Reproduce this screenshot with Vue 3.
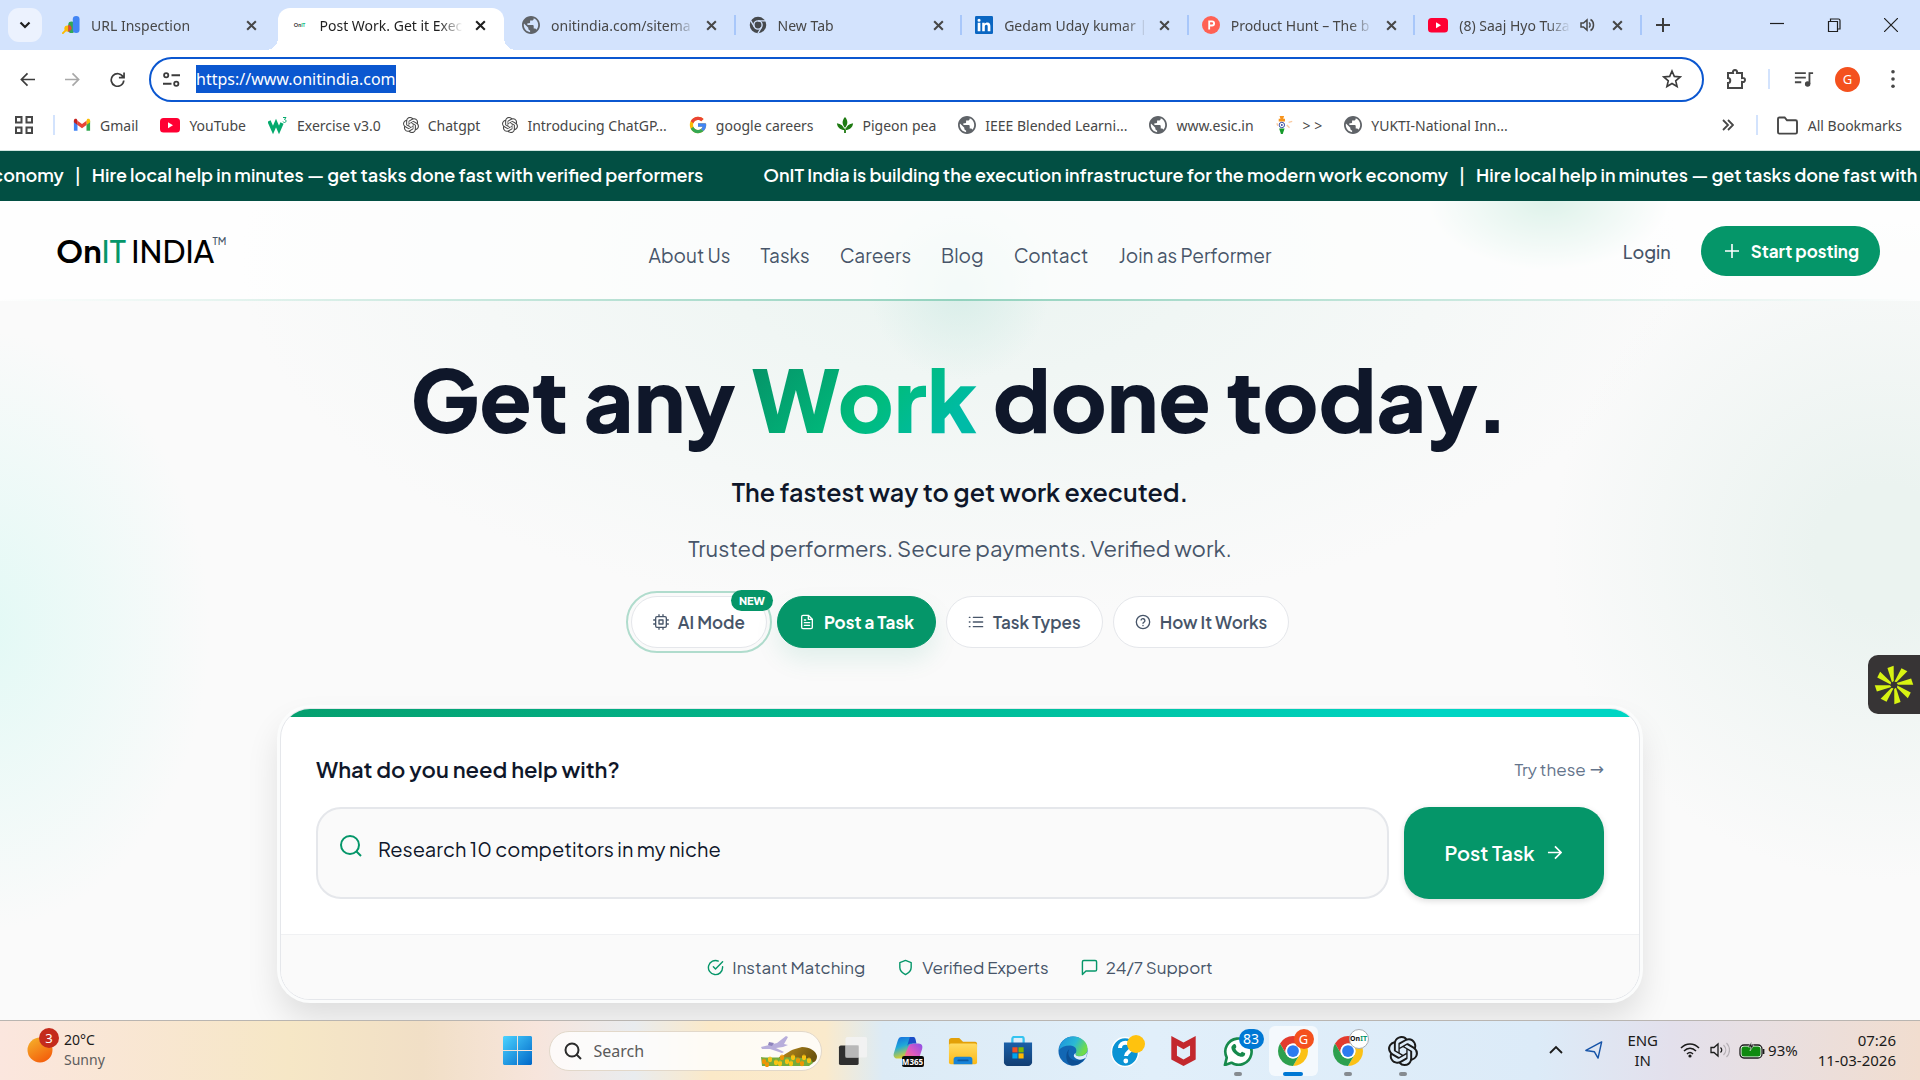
<template>
  <div class="desktop">
    <!-- shared icon shapes -->
    <svg class="sprite" aria-hidden="true">
      <defs>
        <linearGradient id="winGrad" x1="0" y1="0" x2="1" y2="1">
          <stop offset="0" stop-color="#4cd3ff" />
          <stop offset="1" stop-color="#0067c8" />
        </linearGradient>
        <linearGradient id="sunGrad" x1="0" y1="0" x2="0.6" y2="1">
          <stop offset="0" stop-color="#f5b52c" />
          <stop offset="1" stop-color="#f4600c" />
        </linearGradient>
        <linearGradient id="edgeGrad" x1="0" y1="0" x2="1" y2="0.4">
          <stop offset="0" stop-color="#1b8fe0" />
          <stop offset="0.6" stop-color="#2bb9d4" />
          <stop offset="1" stop-color="#6fdc4a" />
        </linearGradient>
        <linearGradient id="pilotBlue" x1="0" y1="0" x2="0.3" y2="1">
          <stop offset="0" stop-color="#1568e0" />
          <stop offset="0.5" stop-color="#20a9d8" />
          <stop offset="1" stop-color="#d8cf2c" />
        </linearGradient>
        <linearGradient id="pilotPink" x1="1" y1="0" x2="0" y2="1">
          <stop offset="0" stop-color="#8a50e8" />
          <stop offset="0.5" stop-color="#e05ac0" />
          <stop offset="1" stop-color="#ff8a50" />
        </linearGradient>
        <linearGradient id="folderGrad" x1="0" y1="0" x2="0" y2="1">
          <stop offset="0" stop-color="#ffdb62" />
          <stop offset="1" stop-color="#fbb917" />
        </linearGradient>
        <linearGradient id="storeGrad" x1="0" y1="0" x2="0" y2="1">
          <stop offset="0" stop-color="#1a5fa8" />
          <stop offset="1" stop-color="#123e72" />
        </linearGradient>
        <linearGradient id="hillGrad" x1="0" y1="0" x2="1" y2="0.3">
          <stop offset="0" stop-color="#c08f1c" />
          <stop offset="1" stop-color="#6d5510" />
        </linearGradient>
      </defs>
      <symbol id="close" viewBox="0 0 12 12">
        <path d="M2 2l8 8M10 2l-8 8" stroke="currentColor" stroke-width="1.9" fill="none" />
      </symbol>
      <symbol id="search-console" viewBox="0 0 20 20">
        <path d="M1 19l5-5" stroke="#fbbc04" stroke-width="2.2" stroke-linecap="round" />
        <circle cx="6" cy="14" r="3.4" fill="#fbbc04" />
        <rect x="7" y="6" width="7" height="13" rx="3.5" fill="#34a853" />
        <rect x="12" y="0" width="7.500" height="19" rx="3.7" fill="#4285f4" />
        <path d="M7 10a3.500 3.500 0 0 1 2 6.500L7 18z" fill="#ea4335" />
      </symbol>
      <symbol id="globe" viewBox="2 2 20 20">
        <path
          fill="#5f6368"
          d="M12 2C6.480 2 2 6.480 2 12s4.480 10 10 10 10-4.480 10-10S17.520 2 12 2zm-1 17.930c-3.950-.490-7-3.850-7-7.930 0-.620.080-1.210.210-1.790L9 15v1c0 1.100.9 2 2 2v1.930zm6.900-2.540c-.260-.810-1-1.390-1.900-1.390h-1v-3c0-.550-.450-1-1-1H8v-2h2c.550 0 1-.450 1-1V7h2c1.100 0 2-.9 2-2v-.410c2.930 1.190 5 4.060 5 7.410 0 2.080-.8 3.970-2.100 5.390z"
        />
      </symbol>
      <symbol id="chrome-dark" viewBox="0 0 24 24">
        <circle cx="12" cy="12" r="11" fill="#45494d" />
        <circle cx="12" cy="12" r="5.500" fill="none" stroke="#d3e3fd" stroke-width="1.800" />
        <path d="M12 6.500h10M7.200 14.700L2.500 6.500M16.800 14.700L12 23" stroke="#d3e3fd" stroke-width="1.800" />
      </symbol>
      <symbol id="linkedin" viewBox="0 0 20 20">
        <rect width="20" height="20" rx="1.500" fill="#0a66c2" />
        <path
          fill="#fff"
          d="M3 7.500h3V17H3zM4.500 3a1.700 1.700 0 1 1 0 3.500 1.700 1.700 0 0 1 0-3.500zM8 7.500h2.800v1.300c.4-.8 1.500-1.500 2.900-1.500 2.900 0 3.400 1.900 3.400 4.400V17h-3v-4.700c0-1.100 0-2.500-1.500-2.500s-1.700 1.200-1.700 2.400V17H8z"
        />
      </symbol>
      <symbol id="producthunt" viewBox="0 0 20 20">
        <circle cx="10" cy="10" r="10" fill="#ff6154" />
        <path d="M7 15V5h4.200a3.300 3.300 0 0 1 0 6.600H9V15zm2-5.500h2.100a1.200 1.200 0 0 0 0-2.500H9z" fill="#fff" />
      </symbol>
      <symbol id="youtube" viewBox="0 0 20 20">
        <rect y="3" width="20" height="14.500" rx="3.500" fill="#f03" />
        <path d="M8 7.200v6l5-3z" fill="#fff" />
      </symbol>
      <symbol id="gmail" viewBox="0 0 20 20">
        <path d="M1 5.500v11h4V8.500z" fill="#4285f4" />
        <path d="M19 5.500v11h-4V8.500z" fill="#34a853" />
        <path d="M15 5.200V10l4-3V5c0-2-2-2.600-3.300-1.600z" fill="#fbbc04" />
        <path d="M5 5.200V10l5 3.700 5-3.700V5.200L10 9z" fill="#ea4335" />
        <path d="M1 5v2l4 3V5.200L4.300 3.500C3 2.500 1 3.200 1 5z" fill="#c5221f" />
      </symbol>
      <symbol id="w3" viewBox="0 0 20 20">
        <path d="M1 6l4 9 3-7 3 7 3-7" fill="none" stroke="#04aa6d" stroke-width="3.400" />
        <path d="M15 2.500h3l-1.500 2c2 0 2 3 0 3-.8 0-1.300-.3-1.500-1" fill="none" stroke="#04aa6d" />
      </symbol>
      <symbol id="openai" viewBox="0 0 24 24">
        <path
          fill="currentColor"
          d="M22.2819 9.8211a5.9847 5.9847 0 0 0-.5157-4.9108 6.0462 6.0462 0 0 0-6.5098-2.9A6.0651 6.0651 0 0 0 4.9807 4.1818a5.9847 5.9847 0 0 0-3.9977 2.9 6.0462 6.0462 0 0 0 .7427 7.0966 5.98 5.98 0 0 0 .511 4.9107 6.051 6.051 0 0 0 6.5146 2.9001A5.9847 5.9847 0 0 0 13.2599 24a6.0557 6.0557 0 0 0 5.7718-4.2058 5.9894 5.9894 0 0 0 3.9977-2.9001 6.0557 6.0557 0 0 0-.7475-7.0729zm-9.022 12.6081a4.4755 4.4755 0 0 1-2.8764-1.0408l.1419-.0804 4.7783-2.7582a.7948.7948 0 0 0 .3927-.6813v-6.7369l2.02 1.1686a.071.071 0 0 1 .038.052v5.5826a4.504 4.504 0 0 1-4.4945 4.4944zm-9.6607-4.1254a4.4708 4.4708 0 0 1-.5346-3.0137l.142.0852 4.783 2.7582a.7712.7712 0 0 0 .7806 0l5.8428-3.3685v2.3324a.0804.0804 0 0 1-.0332.0615L9.74 19.9502a4.4992 4.4992 0 0 1-6.1408-1.6464zM2.3408 7.8956a4.485 4.485 0 0 1 2.3655-1.9728V11.6a.7664.7664 0 0 0 .3879.6765l5.8144 3.3543-2.0201 1.1685a.0757.0757 0 0 1-.071 0l-4.8303-2.7865A4.504 4.504 0 0 1 2.3408 7.872zm16.5963 3.8558L13.1038 8.364 15.1192 7.2a.0757.0757 0 0 1 .071 0l4.8303 2.7913a4.4944 4.4944 0 0 1-.6765 8.1042v-5.6772a.79.79 0 0 0-.407-.667zm2.0107-3.0231l-.142-.0852-4.7735-2.7818a.7759.7759 0 0 0-.7854 0L9.409 9.2297V6.8974a.0662.0662 0 0 1 .0284-.0615l4.8303-2.7866a4.4992 4.4992 0 0 1 6.6802 4.66zM8.3065 12.863l-2.02-1.1638a.0804.0804 0 0 1-.038-.0567V6.0742a4.4992 4.4992 0 0 1 7.3757-3.4537l-.142.0805L8.704 5.459a.7948.7948 0 0 0-.3927.6813zm1.0976-2.3654l2.602-1.4998 2.6069 1.4998v2.9994l-2.5974 1.4997-2.6067-1.4997Z"
        />
      </symbol>
      <symbol id="google" viewBox="2 2 44 44">
        <path
          fill="#fbbc05"
          d="M43.611 20.083H42V20H24v8h11.303c-1.649 4.657-6.080 8-11.303 8-6.627 0-12-5.373-12-12s5.373-12 12-12c3.059 0 5.842 1.154 7.961 3.039l5.657-5.657C34.046 6.053 29.268 4 24 4 12.955 4 4 12.955 4 24s8.955 20 20 20 20-8.955 20-20c0-1.341-.138-2.650-.389-3.917z"
        />
        <path
          fill="#ea4335"
          d="M6.306 14.691l6.571 4.819C14.655 15.108 18.961 12 24 12c3.059 0 5.842 1.154 7.961 3.039l5.657-5.657C34.046 6.053 29.268 4 24 4 16.318 4 9.656 8.337 6.306 14.691z"
        />
        <path
          fill="#34a853"
          d="M24 44c5.166 0 9.860-1.977 13.409-5.192l-6.190-5.238C29.211 35.091 26.715 36 24 36c-5.202 0-9.619-3.317-11.283-7.946l-6.522 5.025C9.505 39.556 16.227 44 24 44z"
        />
        <path
          fill="#4285f4"
          d="M43.611 20.083H42V20H24v8h11.303c-.792 2.237-2.231 4.166-4.087 5.571l6.190 5.238C36.971 39.205 44 34 44 24c0-1.341-.138-2.650-.389-3.917z"
        />
      </symbol>
      <symbol id="leaf" viewBox="0 0 20 20">
        <path
          fill="#1e7a12"
          d="M10 1c3.500 4 3.500 8 0 12C6.500 9 6.500 5 10 1zM1 8c4.500.5 7.500 3 8.500 7.500C5 15.500 1.500 13 1 8zM19 8c-4.500.5-7.500 3-8.500 7.500 4.500 0 8-2.500 8.500-7.500zM9 14h2v5H9z"
        />
      </symbol>
      <symbol id="torch" viewBox="0 0 20 20">
        <path d="M4 0h5l-1 3h2v3H3V3h2z" fill="#f7941d" />
        <circle cx="6.500" cy="10" r="3" fill="#fff" stroke="#2a3e9c" stroke-width="1" />
        <circle cx="6.500" cy="10" r="1" fill="#2a3e9c" />
        <path d="M3.500 14h6l-2 6h-2z" fill="#159a2a" />
        <path d="M1 8l1 3M14 7l4-1M12 10l3 3" stroke="#f9c9a0" stroke-width="1.500" />
      </symbol>
      <symbol id="chrome" viewBox="0 0 24 24">
        <path d="M1.610 6A12 12 0 0 1 22.390 6H12A6 6 0 0 0 6.800 15z" fill="#e33b2e" />
        <path d="M22.390 6A12 12 0 0 1 12 24l5.200-9A6 6 0 0 0 12 6z" fill="#fbc116" />
        <path d="M12 24A12 12 0 0 1 1.610 6l5.190 9a6 6 0 0 0 10.400 0z" fill="#2da04e" />
        <circle cx="12" cy="12" r="6" fill="#fff" />
        <circle cx="12" cy="12" r="4.700" fill="#2d7bf0" />
      </symbol>
      <symbol id="taskview" viewBox="0 0 32 32">
        <rect x="1" y="10" width="21" height="21" rx="2" fill="#2f2f2f" />
        <rect x="8" y="1" width="23" height="22" rx="2" fill="#f3f3f3" fill-opacity="0.85" />
        <rect x="8" y="10" width="14" height="13" fill="#b8b8b8" />
      </symbol>
      <symbol id="m365" viewBox="0 0 32 32">
        <path d="M9 1h10c3 0 3 3 2 6l-4 13c-1 3-3 4-6 4H5c-4 0-5-3-4-6L5 5c1-3 2-4 4-4z" fill="url(#pilotBlue)" />
        <path d="M22 8h5c4 0 5 3 4 6l-3 9c-1 3-3 5-6 5h-9c-2 0-3-2-2-4l5-12c1-3 3-4 6-4z" fill="url(#pilotPink)" />
        <path d="M18 1h3c3 0 3 2 4 7h-6c-2 0-3 1-4 3z" fill="#1a4ec8" />
      </symbol>
      <symbol id="explorer" viewBox="0 0 32 32">
        <path d="M1 5c0-2 1-3 3-3h8l4 4h13c1 0 2 1 2 2v4H1z" fill="#e3a008" />
        <rect x="1" y="8" width="30" height="22" rx="2" fill="url(#folderGrad)" />
        <path d="M6 30v-5c0-2 1-3 3-3h14c2 0 3 1 3 3v5z" fill="#1683d8" />
        <rect x="10" y="25" width="12" height="2" rx="1" fill="#0c5aa0" />
      </symbol>
      <symbol id="store" viewBox="0 0 32 32">
        <path d="M10 8V3c0-1 1-2 2-2h8c1 0 2 1 2 2v5" fill="none" stroke="#35c4f0" stroke-width="2.400" />
        <path d="M1 7h30v21c0 2-2 4-4 4H5c-2 0-4-2-4-4z" fill="url(#storeGrad)" />
        <path d="M10 12h5.500v5.500H10z" fill="#f25022" />
        <path d="M16.500 12H22v5.500h-5.500z" fill="#7fba00" />
        <path d="M10 18.500h5.500V24H10z" fill="#00a4ef" />
        <path d="M16.500 18.500H22V24h-5.500z" fill="#ffb900" />
      </symbol>
      <symbol id="edge" viewBox="0 0 32 32">
        <circle cx="16" cy="16" r="15.500" fill="#1267b4" />
        <path d="M1 15C2 6 8 .5 16 .5c9 0 15.500 6 15.500 13 0 5-4 8-8.500 8-4 0-5-1.500-4-3.500 2-4-1-8-6-8C7 10 3 12 1 15z" fill="url(#edgeGrad)" />
        <path d="M12 14c-3 6 1 12 8 12 4 0 7-1 9-3-3 5-8 8.500-13 8.500C8 31 7 18 12 14z" fill="#0c4f94" />
        <path d="M32 18v9l-4 5h4V18zM19 18c-1 2 0 3.500 4 3.500 4 0 7-1.500 8.500-5L30 23c-3 2.500-9 3.500-12 0-2-2-1-4 1-5z" fill="#e0eefa" />
      </symbol>
      <symbol id="help" viewBox="0 0 36 32">
        <ellipse cx="15" cy="17" rx="13.500" ry="14.500" fill="#0a93d4" stroke="#fff" stroke-width="1.400" />
        <path d="M10 13c0-7 11-7 11 0 0 4-5 4-5 8" fill="none" stroke="#fff" stroke-width="4" />
        <circle cx="15.800" cy="26" r="2.400" fill="#fff" />
        <circle cx="26" cy="9" r="9" fill="#ffc20e" />
      </symbol>
      <symbol id="mcafee" viewBox="0 0 32 32">
        <path d="M3 0l13 7 13-7v25l-13 7-13-7zm6 10v11l7 4 7-4V10l-7 4z" fill="#c3282d" />
      </symbol>
      <symbol id="whatsapp" viewBox="0 0 32 32">
        <path d="M2 31l2-8a14 14 0 1 1 5 5.500z" fill="#fff" stroke="#178a4c" stroke-width="2.800" stroke-linejoin="round" />
        <path
          d="M11 9c1.500-1 2.300-.5 3 1.500.8 2-.8 2.500-.8 3.200 1 2.300 3 4 5.200 4.800.7 0 1.400-2 2.500-1.500 3.300 1.300 3 1.500 2.500 3-1 3-5.500 2.500-8.500.5-3.700-2.200-5.700-5-6-8 0-1.500.9-2.700 2.100-3.500z"
          fill="#178a4c"
        />
      </symbol>
      <symbol id="cpu" viewBox="0 0 24 24">
        <path
          d="M6 4h12a2 2 0 0 1 2 2v12a2 2 0 0 1-2 2H6a2 2 0 0 1-2-2V6a2 2 0 0 1 2-2zM9 9h6v6H9zM9 1v3M15 1v3M9 20v3M15 20v3M20 9h3M20 15h3M1 9h3M1 15h3"
        />
      </symbol>
      <symbol id="doc" viewBox="0 0 24 24">
        <path d="M14 2H6a2 2 0 0 0-2 2v16a2 2 0 0 0 2 2h12a2 2 0 0 0 2-2V8zM14 2v6h6M16 13H8M16 17H8M10 9H8" />
      </symbol>
      <symbol id="list" viewBox="0 0 24 24">
        <path d="M8 5h14M8 12h14M8 19h14M2 5h1M2 12h1M2 19h1" />
      </symbol>
      <symbol id="question" viewBox="0 0 24 24">
        <circle cx="12" cy="12" r="10" />
        <path d="M9.100 9a3 3 0 0 1 5.800 1c0 2-2.900 2.500-2.900 4M12 17v.5" />
      </symbol>
      <symbol id="check" viewBox="0 0 24 24">
        <path d="M22 11v1a10 10 0 1 1-6-9.100M22 4L12 14l-3-3" />
      </symbol>
      <symbol id="shield" viewBox="0 0 24 24">
        <path d="M12 22s8-4 8-10V5l-8-3-8 3v7c0 6 8 10 8 10z" />
      </symbol>
      <symbol id="chat" viewBox="0 0 24 24">
        <path d="M22 15a2 2 0 0 1-2 2H7l-5 5V4a2 2 0 0 1 2-2h16a2 2 0 0 1 2 2z" />
      </symbol>
    </svg>

    <header class="browser">
      <div class="tabstrip">
        <button class="tab-search" aria-label="Search tabs">
          <svg width="12" height="12" viewBox="0 0 12 12"><path d="M1.500 3.500L6 8l4.500-4.500" fill="none" stroke="#1f1f1f" stroke-width="2.200" /></svg>
        </button>
        <div class="tabs">
          <div v-for="tab in tabs" :key="tab.title" class="tab" :class="{ active: tab.active, plain: tab.plain }">
            <span v-if="tab.active" class="onit-icon">On<i>IT</i></span>
            <svg v-else class="favicon" :class="tab.icon"><use :href="'#' + tab.icon" /></svg>
            <span class="tab-title">{{ tab.title }}</span>
            <svg v-if="tab.audio" class="audio" viewBox="0 0 16 16">
              <path d="M2 6h2.500L8 3v10l-3.500-3H2z" fill="none" stroke="#474747" stroke-width="1.500" />
              <path d="M10 5.500c1.500 1 1.500 4 0 5M11.500 2.500c4 2 4 9 0 11" fill="none" stroke="#474747" stroke-width="1.500" />
            </svg>
            <button class="tab-close" aria-label="Close tab"><svg><use href="#close" /></svg></button>
          </div>
        </div>
        <button class="new-tab" aria-label="New tab">
          <svg width="14" height="14" viewBox="0 0 14 14"><path d="M7 0v14M0 7h14" stroke="#3c3c3c" stroke-width="2" /></svg>
        </button>
        <div class="window-controls">
          <button aria-label="Minimize"><svg viewBox="0 0 14 14"><path d="M0 5.500h14" /></svg></button>
          <button aria-label="Restore">
            <svg viewBox="0 0 14 14"><path d="M1.500 3.500h9v10h-9zM3.500 3V1h8a1.500 1.500 0 0 1 1.500 1.500V11h-2" /></svg>
          </button>
          <button aria-label="Close"><svg viewBox="0 0 14 14"><path d="M0 0l14 14M14 0L0 14" /></svg></button>
        </div>
      </div>

      <div class="toolbar">
        <div class="nav-buttons">
          <button aria-label="Back"><svg viewBox="0 0 16 16"><path d="M16 8H2M8 1.500L1.500 8 8 14.500" /></svg></button>
          <button class="dim" aria-label="Forward"><svg viewBox="0 0 16 16"><path d="M0 8h14M8 1.500L14.500 8 8 14.500" /></svg></button>
          <button aria-label="Reload"><svg viewBox="0 0 16 16"><path d="M14 5.500A6.700 6.700 0 1 0 14.700 9M15 .5V6H9.500" /></svg></button>
        </div>
        <div class="omnibox">
          <svg class="site-icon" viewBox="0 0 16 16">
            <path d="M8 4h8M0 12h8" /><circle cx="3" cy="4" r="2" /><circle cx="12.500" cy="12" r="2" />
          </svg>
          <input v-model="url" class="url" type="text" aria-label="Address" spellcheck="false" />
          <button class="star" aria-label="Bookmark this tab">
            <svg viewBox="0 0 20 20"><path d="M10 2l2.300 5.400 5.900.5-4.500 3.900 1.400 5.700-5.100-3-5.100 3 1.400-5.700L1.800 7.900l5.900-.5z" /></svg>
          </button>
        </div>
        <div class="toolbar-right">
          <button aria-label="Extensions">
            <svg class="puzzle" viewBox="0 0 22 22"><path d="M3 5h5c-1-4 5-4 4 0h5v5c4-1 4 5 0 4v6H3v-5c3 0 3-5 0-5z" /></svg>
          </button>
          <i class="bar"></i>
          <button aria-label="Media controls">
            <svg class="media" viewBox="0 0 22 20">
              <path d="M1 3h12M1 8h12M1 13h7" /><path d="M17 15V3h4" /><circle cx="15" cy="15" r="2" fill="#474747" />
            </svg>
          </button>
          <button class="avatar">G</button>
          <button aria-label="Menu" class="dots"><svg viewBox="0 0 4 20"><circle cx="2" cy="2" r="2" /><circle cx="2" cy="10" r="2" /><circle cx="2" cy="18" r="2" /></svg></button>
        </div>
      </div>

      <nav class="bookmarks">
        <button class="apps" aria-label="Apps">
          <svg viewBox="0 0 18 18"><path d="M1 1h5.500v5.500H1zM11.500 1H17v5.500h-5.500zM1 11.500h5.500V17H1zM11.500 11.500H17V17h-5.500z" /></svg>
        </button>
        <i class="bar"></i>
        <div class="bookmark-list">
          <a v-for="mark in bookmarks" :key="mark.label" href="#">
            <svg class="favicon" :class="mark.icon"><use :href="'#' + mark.icon" /></svg>{{ mark.label }}
          </a>
        </div>
        <button class="overflow" aria-label="More bookmarks">
          <svg viewBox="0 0 12 12"><path d="M1 1l5 5-5 5M6 1l5 5-5 5" /></svg>
        </button>
        <i class="bar"></i>
        <a href="#" class="all">
          <svg viewBox="0 0 22 20"><path d="M1 3c0-1 .5-1.500 1.500-1.500H8l2.500 3h9c1 0 1.500.5 1.500 1.500v11c0 1-.5 1.500-1.500 1.500h-17C1.500 18.500 1 18 1 17z" /></svg>All Bookmarks
        </a>
      </nav>
    </header>

    <main class="page">
      <div class="ticker">
        <div class="ticker-track">
          <p v-for="n in 3" :key="n">
            OnIT India is building the execution infrastructure for the modern work economy<span>|</span>Hire local help in
            minutes — get tasks done fast with verified performers
          </p>
        </div>
      </div>

      <div class="site-nav">
        <a href="#" class="logo"><b>On</b><em>IT</em> INDIA<sup>TM</sup></a>
        <nav class="links">
          <a v-for="link in links" :key="link" href="#">{{ link }}</a>
        </nav>
        <div class="account">
          <a href="#">Login</a>
          <button class="start">
            <svg width="14" height="14" viewBox="0 0 14 14"><path d="M7 0v14M0 7h14" stroke="#fff" stroke-width="1.600" /></svg>
            Start posting
          </button>
        </div>
      </div>

      <section class="hero">
        <h1>Get any <span>Work</span> done today.</h1>
        <p class="lead">The fastest way to get work executed.</p>
        <p class="sub">Trusted performers. Secure payments. Verified work.</p>

        <div class="modes">
          <button v-for="mode in modes" :key="mode.label" class="mode" :class="mode.kind">
            <svg class="line"><use :href="'#' + mode.icon" /></svg>{{ mode.label }}
            <span v-if="mode.badge" class="badge">{{ mode.badge }}</span>
          </button>
        </div>

        <form class="card" @submit.prevent>
          <div class="card-body">
            <div class="card-head">
              <label for="task">What do you need help with?</label>
              <button type="button" class="try">Try these <span>→</span></button>
            </div>
            <div class="card-row">
              <div class="task-box">
                <svg viewBox="0 0 24 24"><circle cx="11" cy="11" r="9" /><path d="M17.500 17.500L22 22" /></svg>
                <textarea id="task" v-model="task" spellcheck="false"></textarea>
              </div>
              <button type="submit" class="post">
                Post Task
                <svg viewBox="0 0 16 16"><path d="M1 8h14M8.500 1.500L15 8l-6.500 6.500" /></svg>
              </button>
            </div>
          </div>
          <ul class="perks">
            <li v-for="perk in perks" :key="perk.label"><svg class="line"><use :href="'#' + perk.icon" /></svg>{{ perk.label }}</li>
          </ul>
        </form>
      </section>

      <button class="widget" aria-label="Accessibility">
        <svg viewBox="0 0 40 40">
          <path
            v-for="n in 8"
            :key="n"
            d="M18.500 17L16.500 2l6.500-1-2.500 15z"
            :transform="`rotate(${n * 45 - 10} 20 20)`"
          />
        </svg>
      </button>
    </main>

    <footer class="taskbar">
      <div class="weather">
        <div class="sun">
          <svg width="26" height="26" viewBox="0 0 26 26"><circle cx="13" cy="13" r="12.500" fill="url(#sunGrad)" /></svg>
          <span>3</span>
        </div>
        <p>20°C<small>Sunny</small></p>
      </div>

      <div class="dock">
        <button class="dock-item" aria-label="Start">
          <svg class="start-logo" viewBox="0 0 30 30">
            <path d="M1 0h13.500v14.500H0V1zM15.500 0H29l1 1v13.500H15.500zM0 15.500h14.500V30H1l-1-1zM15.500 15.500H30V29l-1 1H15.500z" fill="url(#winGrad)" />
          </svg>
        </button>
        <label class="search">
          <svg class="lens" viewBox="0 0 18 18"><circle cx="8" cy="8" r="6.500" /><path d="M12.500 12.500L17 17" /></svg>
          <input type="text" placeholder="Search" />
          <svg class="scene" viewBox="0 0 58 32">
            <path d="M19 22c7-2 9-6 16-8l7-2c8 0 14 4 15 9 0 4-2 6-5 7H19z" fill="url(#hillGrad)" />
            <path d="M1 22c10 2 30-2 50 2l2 4-4 3H2z" fill="#76ab3c" />
            <path d="M1 12l16-4L26 1l2 1-4 7 4 1-5 2-7 1 8 4-2 1-12-4H2z" fill="#b8aedb" />
            <path d="M9 7l5 1-2 3-4-1z" fill="#8e84bd" />
            <path
              v-for="(t, i) in tulips"
              :key="i"
              :d="`M${t[0]} ${t[1]}l1 1 1-2 1 2 1-1v3c0 3-4 3-4 0z`"
              :fill="i % 3 ? '#f9c312' : '#ee9505'"
            />
          </svg>
        </label>
        <button v-for="app in apps" :key="app.name" class="dock-item" :class="app.state" :aria-label="app.name">
          <svg class="app-icon" :class="app.icon"><use :href="'#' + app.icon" /></svg>
          <span v-if="app.badge" class="app-badge" :class="app.badgeKind">
            <template v-if="app.badgeKind === 'brand'">On<i>IT</i></template>
            <template v-else>{{ app.badge }}</template>
          </span>
        </button>
      </div>

      <div class="tray">
        <button aria-label="Show hidden icons"><svg width="14" height="9" viewBox="0 0 14 9"><path d="M1 8l6-6 6 6" fill="none" stroke="#1b1b1b" stroke-width="1.800" /></svg></button>
        <svg class="locate" viewBox="0 0 20 20"><path d="M18.500 1L1 10.500l9.500 1.500 4 7z" fill="none" stroke="#1553a8" stroke-width="1.600" stroke-linejoin="round" /></svg>
        <p class="lang">ENG<br />IN</p>
        <div class="status">
          <svg class="wifi" viewBox="0 0 20 16">
            <path d="M1 6c5-5.500 13-5.500 18 0M4 9c3.500-3.700 8.500-3.700 12 0M7 12c2-2 4-2 6 0" fill="none" stroke="#1b1b1b" stroke-width="1.500" />
            <circle cx="10" cy="14" r="1.600" fill="#1b1b1b" />
          </svg>
          <svg class="volume" viewBox="0 0 20 16">
            <path d="M1 5.500h3L8 2v12l-4-3.500H1z" fill="none" stroke="#1b1b1b" stroke-width="1.300" />
            <path d="M10.500 5.500c1.500 1.500 1.500 3.500 0 5" fill="none" stroke="#1b1b1b" stroke-width="1.200" />
            <path d="M13.500 3c3 3 3 7 0 10M16.500 1c4 4 4 10 0 14" fill="none" stroke="#b5b0b5" stroke-width="1.200" />
          </svg>
          <svg class="battery" viewBox="0 0 26 18">
            <rect x="1" y="4" width="22" height="13" rx="4" fill="#fff" stroke="#1b1b1b" stroke-width="1.300" />
            <rect x="2.500" y="5.500" width="19" height="10" rx="2.500" fill="#0f8a10" />
            <path d="M24.600 8v5" stroke="#1b1b1b" stroke-width="1.600" />
            <path d="M13 0l-4 6h3l-1 4 4-6h-3z" fill="#1b1b1b" stroke="#fff" stroke-width="0.500" />
          </svg>
          93%
        </div>
        <p class="clock">07:26<br />11-03-2026</p>
      </div>
    </footer>
  </div>
</template>

<script setup>
import { ref } from 'vue';

const url = ref('https://www.onitindia.com');
const task = ref('Research 10 competitors in my niche');

const tabs = [
  { title: 'URL Inspection', icon: 'search-console', plain: true },
  { title: 'Post Work. Get it Exec', active: true },
  { title: 'onitindia.com/sitema', icon: 'globe' },
  { title: 'New Tab', icon: 'chrome-dark' },
  { title: 'Gedam Uday kumar |', icon: 'linkedin' },
  { title: 'Product Hunt – The b', icon: 'producthunt' },
  { title: '(8) Saaj Hyo Tuza', icon: 'youtube', audio: true },
];

const bookmarks = [
  { label: 'Gmail', icon: 'gmail' },
  { label: 'YouTube', icon: 'youtube' },
  { label: 'Exercise v3.0', icon: 'w3' },
  { label: 'Chatgpt', icon: 'openai' },
  { label: 'Introducing ChatGP...', icon: 'openai' },
  { label: 'google careers', icon: 'google' },
  { label: 'Pigeon pea', icon: 'leaf' },
  { label: 'IEEE Blended Learni...', icon: 'globe' },
  { label: 'www.esic.in', icon: 'globe' },
  { label: '> >', icon: 'torch' },
  { label: 'YUKTI-National Inn...', icon: 'globe' },
];

const links = ['About Us', 'Tasks', 'Careers', 'Blog', 'Contact', 'Join as Performer'];

const modes = [
  { label: 'AI Mode', icon: 'cpu', kind: 'ring', badge: 'NEW' },
  { label: 'Post a Task', icon: 'doc', kind: 'primary' },
  { label: 'Task Types', icon: 'list' },
  { label: 'How It Works', icon: 'question' },
];

const perks = [
  { label: 'Instant Matching', icon: 'check' },
  { label: 'Verified Experts', icon: 'shield' },
  { label: '24/7 Support', icon: 'chat' },
];

const apps = [
  { name: 'Task View', icon: 'taskview' },
  { name: 'Microsoft 365 Copilot', icon: 'm365', badge: 'M365', badgeKind: 'tag' },
  { name: 'File Explorer', icon: 'explorer' },
  { name: 'Microsoft Store', icon: 'store' },
  { name: 'Edge', icon: 'edge' },
  { name: 'Support', icon: 'help' },
  { name: 'McAfee', icon: 'mcafee' },
  { name: 'WhatsApp', icon: 'whatsapp', state: 'open', badge: '83', badgeKind: 'count' },
  { name: 'Chrome', icon: 'chrome', state: 'focused', badge: 'G', badgeKind: 'profile' },
  { name: 'Chrome (OnIT)', icon: 'chrome', state: 'open', badge: 'OnIT', badgeKind: 'brand' },
  { name: 'ChatGPT', icon: 'openai', state: 'open' },
];

// flower heads in the search box scene
const tulips = [
  [2, 24], [8, 22], [14, 25], [20, 20], [25, 24], [31, 20], [36, 23], [42, 20], [47, 23], [5, 27], [18, 26], [29, 26], [40, 26],
];
</script>

<style>
body {
  margin: 0;
}
</style>

<style scoped>
.desktop {
  --ui: 'Segoe UI', 'Noto Sans', sans-serif;
  --site: 'Plus Jakarta Sans', Inter, sans-serif;
  display: flex;
  flex-direction: column;
  height: 100vh;
  overflow: hidden;
  font-family: var(--ui);
  color: #1f1f1f;
}
.desktop * {
  box-sizing: border-box;
}
.sprite {
  position: absolute;
  width: 0;
  height: 0;
}
button {
  display: flex;
  align-items: center;
  justify-content: center;
  padding: 0;
  border: 0;
  background: none;
  font: inherit;
  color: inherit;
}
a {
  color: inherit;
  text-decoration: none;
}
p {
  margin: 0;
}
svg {
  flex: none;
}

/* tab strip */
.browser {
  background: #fff;
}
.tabstrip {
  display: flex;
  height: 50px;
  padding-right: 1px;
  background: #d3e3fd;
}
.tab-search {
  width: 34px;
  height: 34px;
  margin: 8px 7px 0 8px;
  border-radius: 11px;
  background: #ecf2fe;
}
.tabs {
  display: flex;
  width: 83%;
}
.tab {
  position: relative;
  display: flex;
  flex: 1;
  align-items: center;
  min-width: 0;
  height: 42px;
  margin-top: 8px;
  padding: 0 15px 8px 13px;
  font-size: 14px;
  color: #474747;
}
.tab:not(.active):not(.plain)::after {
  content: '';
  position: absolute;
  right: 0;
  top: 7px;
  width: 2px;
  height: 20px;
  background: #a8c7fa;
}
.tab.active {
  margin: 8px 5px 0 2px;
  border-radius: 12px 12px 0 0;
  background: #fff;
  color: #1f1f1f;
}
.tab.active::before,
.tab.active::after {
  content: '';
  position: absolute;
  bottom: 0;
  width: 12px;
  height: 12px;
}
.tab.active::before {
  left: -12px;
  background: radial-gradient(circle at 0 0, transparent 12px, #fff 12px);
}
.tab.active::after {
  right: -12px;
  background: radial-gradient(circle at 100% 0, transparent 12px, #fff 12px);
}
.favicon {
  width: 18px;
  height: 18px;
}
.favicon.youtube,
.favicon.w3 {
  width: 20px;
  height: 20px;
}
.onit-icon {
  width: 18px;
  font: 700 5px var(--site);
  text-align: center;
}
.onit-icon i {
  font-style: normal;
  color: #10b981;
}
.tab-title {
  flex: 1;
  min-width: 0;
  margin: 0 8px 0 11px;
  overflow: hidden;
  white-space: nowrap;
  mask-image: linear-gradient(to right, #000 calc(100% - 24px), transparent);
}
.audio {
  width: 16px;
  height: 16px;
  margin-right: 14px;
}
.tab-close {
  width: 18px;
  height: 18px;
}
.tab-close svg {
  width: 13px;
  height: 13px;
}
.new-tab {
  width: 42px;
}
.window-controls {
  display: flex;
  margin-left: auto;
}
.window-controls button {
  width: 57px;
}
.window-controls svg {
  width: 14px;
  height: 14px;
  fill: none;
  stroke: #1f1f1f;
  stroke-width: 1.2;
}

/* toolbar */
.toolbar {
  display: flex;
  align-items: center;
  height: 58px;
  padding: 0 8px 0 5px;
}
.nav-buttons {
  display: flex;
  width: 144px;
}
.nav-buttons button {
  width: 45px;
  height: 45px;
}
.nav-buttons svg {
  width: 15px;
  height: 15px;
  fill: none;
  stroke: #3c3c3c;
  stroke-width: 1.8;
}
.nav-buttons .dim svg {
  stroke: #a8a8a8;
}
.omnibox {
  display: flex;
  flex: 1;
  align-items: center;
  height: 45px;
  padding: 0 20px 0 12px;
  border: 2px solid #0b57d0;
  border-radius: 23px;
}
.site-icon {
  width: 17px;
  height: 17px;
  margin-right: 16px;
  fill: none;
  stroke: #3c3c3c;
  stroke-width: 1.7;
}
.url {
  field-sizing: content;
  height: 28px;
  padding: 0;
  border: 0;
  background: #0b57d0;
  color: #fff;
  font: 16px var(--ui);
}
.star {
  margin-left: auto;
}
.star svg {
  width: 20px;
  height: 20px;
  fill: none;
  stroke: #3c3c3c;
  stroke-width: 1.6;
}
.toolbar-right {
  display: flex;
  align-items: center;
  width: 208px;
  padding-left: 21px;
}
.toolbar-right svg {
  fill: none;
  stroke: #474747;
  stroke-width: 2;
}
.toolbar-right .puzzle {
  width: 22px;
  height: 22px;
}
.bar {
  width: 2px;
  height: 20px;
  background: #d3e3fd;
}
.toolbar-right .bar {
  margin: 0 24px 0 21px;
}
.toolbar-right .media {
  width: 20px;
  height: 19px;
}
.avatar {
  width: 25px;
  height: 25px;
  margin: 0 31px 0 21px;
  border-radius: 50%;
  background: #f4511e;
  color: #fff;
  font-size: 13px;
}
.toolbar-right .dots svg {
  width: 4px;
  height: 18px;
  fill: #474747;
  stroke: none;
}

/* bookmarks bar */
.bookmarks {
  display: flex;
  align-items: center;
  height: 42px;
  padding: 0 18px 8px 15px;
  font-size: 14px;
  color: #474747;
}
.bookmarks .apps svg {
  width: 18px;
  height: 18px;
  fill: none;
  stroke: #474747;
  stroke-width: 2;
}
.bookmarks .apps + .bar {
  margin: 0 18px 0 20px;
}
.bookmark-list {
  display: flex;
  flex: 1;
  gap: 22px;
}
.bookmarks a {
  display: flex;
  align-items: center;
  gap: 9px;
  white-space: nowrap;
}
.bookmarks .openai {
  width: 16px;
  height: 16px;
}
.overflow svg {
  width: 12px;
  height: 12px;
  margin-right: 22px;
  fill: none;
  stroke: #474747;
  stroke-width: 1.8;
}
.bookmarks .all {
  margin-left: 19px;
  gap: 10px;
}
.bookmarks .all svg {
  width: 21px;
  height: 19px;
  fill: none;
  stroke: #474747;
  stroke-width: 2;
}

/* page */
.page {
  position: relative;
  flex: 1;
  min-height: 0;
  overflow: hidden;
  font-family: var(--site);
  color: #0f172a;
  background:
    radial-gradient(90px 90px at 50% 140px, #d9eee9, transparent),
    radial-gradient(120px 70px at 1548px 50px, #8fd3b8, transparent),
    radial-gradient(230px 300px at -20px 480px, #e2f9f5, transparent),
    radial-gradient(330px 330px at 98% 400px, #ebf3f0 20%, transparent),
    radial-gradient(720px 360px at 50% 110px, #ebf4f1, transparent),
    #fafafa;
}
.ticker {
  height: 51px;
  overflow: hidden;
  border-top: 1px solid #cfe5df;
  background: #024f43;
  color: #fff;
  font-size: 18px;
  font-weight: 600;
  line-height: 48px;
}
.ticker-track {
  display: flex;
  gap: 60px;
  width: max-content;
  transform: translateX(-621px);
}
.ticker p {
  white-space: nowrap;
}
.ticker span {
  margin: 0 11px;
  font-weight: 500;
}
.site-nav {
  display: grid;
  grid-template-columns: 1fr auto 1fr;
  align-items: center;
  height: 100px;
  padding: 0 40px;
  border-bottom: 2px solid;
  border-image: linear-gradient(to right, transparent, #93d2be 50%, transparent) 1;
  background: rgba(255, 255, 255, 0.7);
}
.logo {
  padding: 2px 0 0 16px;
  font-size: 31px;
  font-weight: 500;
  line-height: 40px;
  color: #000;
}
.logo b {
  font-weight: 700;
}
.logo em {
  font-style: normal;
  color: #059669;
}
.logo sup {
  margin-left: -2px;
  font-size: 10px;
  line-height: 0;
  vertical-align: 18px;
  color: #475569;
}
.links {
  display: flex;
  gap: 30px;
  padding-top: 10px;
  font-size: 19px;
  color: #475569;
}
.account {
  display: flex;
  align-items: center;
  justify-content: flex-end;
  gap: 30px;
  padding-top: 2px;
  font-size: 18px;
  font-weight: 500;
  color: #475569;
}
.start {
  gap: 12px;
  height: 50px;
  padding: 0 21px 0 24px;
  border-radius: 25px;
  background: #059669;
  color: #fff;
  font-size: 17px;
  font-weight: 700;
}

/* hero */
.hero {
  display: flex;
  flex-direction: column;
  align-items: center;
  padding: 42px 40px 0;
}
h1 {
  margin: 0;
  font-size: 86px;
  font-weight: 800;
  line-height: 110px;
}
h1 span {
  background: linear-gradient(135deg, #059669 10%, #00bc7d 55%, #00bba7 85%);
  background-clip: text;
  color: transparent;
}
.lead {
  margin-top: 21px;
  font-size: 25px;
  font-weight: 600;
  line-height: 36px;
}
.sub {
  margin-top: 20px;
  font-size: 22px;
  line-height: 36px;
  color: #475569;
}
.modes {
  display: flex;
  gap: 10px;
  margin-top: 30px;
}
.mode {
  position: relative;
  gap: 9px;
  height: 52px;
  padding: 0 21px;
  border: 1px solid #e5e7eb;
  border-radius: 26px;
  background: #fff;
  color: #475569;
  font-size: 17px;
  font-weight: 600;
}
.line {
  width: 17px;
  height: 17px;
  fill: none;
  stroke: currentColor;
  stroke-width: 2;
  stroke-linecap: round;
  stroke-linejoin: round;
}
.mode .line {
  width: 16px;
  height: 16px;
}
.mode.ring {
  outline: 2px solid #b0dccd;
  outline-offset: 3px;
}
.mode.primary {
  border-color: #059669;
  background: #059669;
  color: #fff;
  font-weight: 700;
  box-shadow: 0 12px 24px rgba(5, 150, 105, 0.1);
}
.badge {
  position: absolute;
  top: -7px;
  right: -7px;
  padding: 0 8px;
  border-radius: 11px;
  background: #059669;
  color: #fff;
  font-size: 11px;
  font-weight: 800;
  line-height: 21px;
}
.card {
  position: relative;
  width: 100%;
  max-width: 1360px;
  margin-top: 60px;
  border: 1px solid #e5e7eb;
  border-radius: 30px;
  background: #fff;
  overflow: hidden;
  box-shadow:
    0 0 0 3px #fbfcfc,
    0 18px 34px rgba(0, 0, 0, 0.12);
}
.card::before {
  content: '';
  display: block;
  height: 8px;
  background: linear-gradient(to right, #059f6e, #00bc96 50%, #00d5c3 85%);
}
.card-body {
  padding: 34px 35px 35px;
}
.card-head {
  display: flex;
  align-items: center;
  justify-content: space-between;
  height: 35px;
  margin-bottom: 21px;
}
.card-head label {
  font-size: 22px;
  font-weight: 600;
}
.try {
  gap: 4px;
  color: #64748b;
  font-size: 17px;
}
.try span {
  font-family: 'DejaVu Sans', sans-serif;
}
.card-row {
  display: flex;
  gap: 15px;
}
.task-box {
  display: flex;
  flex: 1;
  height: 92px;
  padding: 25px 21px;
  border: 2px solid #e5e7eb;
  border-radius: 25px;
  background: #fafafa;
}
.task-box svg {
  width: 24px;
  height: 24px;
  margin-right: 15px;
  fill: none;
  stroke: #059669;
  stroke-width: 2;
}
.task-box textarea {
  flex: 1;
  padding: 0;
  border: 0;
  outline: none;
  resize: none;
  background: none;
  color: #0f172a;
  font: 20px / 30px var(--site);
}
.post {
  gap: 12px;
  width: 200px;
  padding: 0 2px 2px 0;
  border-radius: 25px;
  background: #059669;
  color: #fff;
  font-size: 20px;
  font-weight: 600;
  box-shadow: 0 2px 6px rgba(0, 0, 0, 0.14);
}
.post svg {
  width: 15px;
  height: 15px;
  fill: none;
  stroke: #fff;
  stroke-width: 1.8;
}
.perks {
  display: flex;
  align-items: center;
  justify-content: center;
  gap: 32px;
  height: 65px;
  margin: 0;
  padding: 0;
  border-top: 1px solid #f0f1f3;
  background: #fafafa;
  list-style: none;
  color: #475569;
  font-size: 17px;
}
.perks li {
  display: flex;
  align-items: center;
  gap: 8px;
}
.perks .line {
  stroke: #059669;
}
.widget {
  position: absolute;
  top: 505px;
  right: 0;
  width: 52px;
  height: 59px;
  border-radius: 10px 0 0 10px;
  background: #373435;
}
.widget svg {
  width: 40px;
  height: 40px;
  fill: #d8f312;
}

/* taskbar */
.taskbar {
  display: grid;
  grid-template-columns: 1fr auto 1fr;
  align-items: center;
  height: 60px;
  border-top: 1px solid #b9b5b1;
  background: linear-gradient(
    to right,
    #fbe6de,
    #f6e7c6 15%,
    #f1dfc6 22%,
    #f7e5dc 28%,
    #e9ecef 33%,
    #fbe9c8 37%,
    #faeacc 43%,
    #dcebf6 46%,
    #e1effa 60%,
    #dcebf8 80%,
    #e3e0ec 87%,
    #f1ddcf
  );
  font-size: 15px;
  line-height: 20px;
  color: #1b1b1b;
}
.weather {
  display: flex;
  align-items: center;
  gap: 11px;
  padding: 0 0 2px 27px;
}
.sun {
  position: relative;
  height: 26px;
}
.sun span {
  position: absolute;
  top: -9px;
  right: -6px;
  width: 20px;
  border-radius: 50%;
  background: #c42b1c;
  color: #fff;
  font-size: 13px;
  text-align: center;
}
.weather p {
  font-size: 14px;
}
.weather small {
  display: block;
  font-size: 14px;
  color: #5d5d5d;
}
.dock {
  display: flex;
  align-items: center;
}
.dock-item {
  position: relative;
  width: 55px;
  height: 50px;
}
.start-logo {
  width: 29px;
  height: 29px;
}
.search {
  display: flex;
  align-items: center;
  width: 273px;
  height: 40px;
  margin: 0 4px;
  padding: 0 3px 0 14px;
  border: 1px solid #e2d8ca;
  border-radius: 20px;
  background: rgba(255, 255, 255, 0.8);
}
.lens {
  width: 18px;
  height: 18px;
  fill: none;
  stroke: #2b2b2b;
  stroke-width: 2;
}
.search input {
  flex: 1;
  min-width: 0;
  margin-left: 12px;
  padding: 0;
  border: 0;
  background: none;
  font: 16px var(--ui);
}
.search input::placeholder {
  color: #5a5a5a;
}
.scene {
  width: 58px;
  height: 32px;
}
.app-icon {
  width: 30px;
  height: 30px;
}
.app-icon.help {
  width: 36px;
  height: 32px;
}
.app-icon.mcafee {
  width: 31px;
}
.dock-item.focused::before {
  content: '';
  position: absolute;
  inset: 0 3px;
  border-radius: 6px;
  background: rgba(255, 255, 255, 0.65);
}
.focused .app-icon {
  position: relative;
}
.dock-item.open::after,
.dock-item.focused::after {
  content: '';
  position: absolute;
  bottom: 0;
  width: 8px;
  height: 4px;
  border-radius: 2px;
  background: #868b90;
}
.dock-item.focused::after {
  width: 20px;
  background: #0078d4;
}
.app-badge {
  position: absolute;
  top: 3px;
  left: 28px;
  width: 20px;
  border-radius: 10px;
  color: #fff;
  font-size: 13px;
  line-height: 20px;
  text-align: center;
}
.app-badge.count {
  width: 25px;
  background: #0078d4;
  font-size: 14px;
}
.app-badge.profile {
  background: #f4511e;
}
.app-badge.brand {
  border: 1px solid #a9adb2;
  background: #fff;
  color: #111;
  font-size: 7px;
  font-weight: 700;
  line-height: 18px;
}
.app-badge.tag {
  top: 30px;
  left: 21px;
  width: 22px;
  border-radius: 2px;
  background: #0a0a0a;
  font-size: 8px;
  font-weight: 700;
  line-height: 11px;
}
.brand i {
  font-style: normal;
  color: #059669;
}
.tray {
  display: flex;
  align-items: center;
  justify-content: flex-end;
  padding: 0 24px 2px 0;
}
.locate {
  width: 18px;
  height: 20px;
  margin: 0 24px 0 22px;
}
.lang {
  margin-right: 22px;
  text-align: center;
}
.status {
  display: flex;
  align-items: center;
  margin-right: 20px;
}
.wifi {
  width: 20px;
  height: 16px;
  margin-right: 10px;
}
.volume {
  width: 20px;
  height: 16px;
  margin-right: 9px;
}
.battery {
  width: 26px;
  height: 18px;
  margin-right: 3px;
}
.clock {
  text-align: right;
}
</style>
